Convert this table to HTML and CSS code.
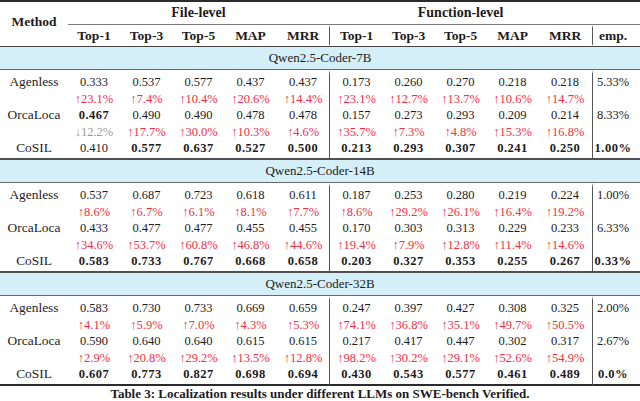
FILE: index.html
```html
<!DOCTYPE html>
<html>
<head>
<meta charset="utf-8">
<link rel="stylesheet" href="styles.css">
</head>
<body>
<table class="results">
<colgroup>
<col class="c-method"><col class="c-f1"><col class="c-f3"><col class="c-f5"><col class="c-fmap"><col class="c-fmrr">
<col class="c-g1"><col class="c-g3"><col class="c-g5"><col class="c-gmap"><col class="c-gmrr"><col class="c-emp">
</colgroup>
<thead>
<tr class="h1">
<th rowspan="2" class="method-h">Method</th>
<th colspan="5" class="grp">File-level</th>
<th colspan="5" class="grp">Function-level</th>
<th class="grp"></th>
</tr>
<tr class="h2">
<th>Top-1</th><th>Top-3</th><th>Top-5</th><th>MAP</th><th>MRR</th>
<th class="div">Top-1</th><th>Top-3</th><th>Top-5</th><th>MAP</th><th>MRR</th>
<th class="div emp">emp.</th>
</tr>
</thead>
<tbody>
<tr class="band first-band"><td colspan="12">Qwen2.5-Coder-7B</td></tr>
<tr class="first"><td class="m">Agenless</td><td>0.333</td><td>0.537</td><td>0.577</td><td>0.437</td><td>0.437</td><td class="div">0.173</td><td>0.260</td><td>0.270</td><td>0.218</td><td>0.218</td><td class="div emp">5.33%</td></tr>
<tr><td class="m"></td><td class="up">↑23.1%</td><td class="up">↑7.4%</td><td class="up">↑10.4%</td><td class="up">↑20.6%</td><td class="up">↑14.4%</td><td class="div up">↑23.1%</td><td class="up">↑12.7%</td><td class="up">↑13.7%</td><td class="up">↑10.6%</td><td class="up">↑14.7%</td><td class="div emp"></td></tr>
<tr><td class="m">OrcaLoca</td><td class="b">0.467</td><td>0.490</td><td>0.490</td><td>0.478</td><td>0.478</td><td class="div">0.157</td><td>0.273</td><td>0.293</td><td>0.209</td><td>0.214</td><td class="div emp">8.33%</td></tr>
<tr><td class="m"></td><td class="down">↓12.2%</td><td class="up">↑17.7%</td><td class="up">↑30.0%</td><td class="up">↑10.3%</td><td class="up">↑4.6%</td><td class="div up">↑35.7%</td><td class="up">↑7.3%</td><td class="up">↑4.8%</td><td class="up">↑15.3%</td><td class="up">↑16.8%</td><td class="div emp"></td></tr>
<tr class="last"><td class="m">CoSIL</td><td>0.410</td><td class="b">0.577</td><td class="b">0.637</td><td class="b">0.527</td><td class="b">0.500</td><td class="div b">0.213</td><td class="b">0.293</td><td class="b">0.307</td><td class="b">0.241</td><td class="b">0.250</td><td class="div emp b">1.00%</td></tr>
</tbody>
<tbody>
<tr class="band"><td colspan="12">Qwen2.5-Coder-14B</td></tr>
<tr class="first"><td class="m">Agenless</td><td>0.537</td><td>0.687</td><td>0.723</td><td>0.618</td><td>0.611</td><td class="div">0.187</td><td>0.253</td><td>0.280</td><td>0.219</td><td>0.224</td><td class="div emp">1.00%</td></tr>
<tr><td class="m"></td><td class="up">↑8.6%</td><td class="up">↑6.7%</td><td class="up">↑6.1%</td><td class="up">↑8.1%</td><td class="up">↑7.7%</td><td class="div up">↑8.6%</td><td class="up">↑29.2%</td><td class="up">↑26.1%</td><td class="up">↑16.4%</td><td class="up">↑19.2%</td><td class="div emp"></td></tr>
<tr><td class="m">OrcaLoca</td><td>0.433</td><td>0.477</td><td>0.477</td><td>0.455</td><td>0.455</td><td class="div">0.170</td><td>0.303</td><td>0.313</td><td>0.229</td><td>0.233</td><td class="div emp">6.33%</td></tr>
<tr><td class="m"></td><td class="up">↑34.6%</td><td class="up">↑53.7%</td><td class="up">↑60.8%</td><td class="up">↑46.8%</td><td class="up">↑44.6%</td><td class="div up">↑19.4%</td><td class="up">↑7.9%</td><td class="up">↑12.8%</td><td class="up">↑11.4%</td><td class="up">↑14.6%</td><td class="div emp"></td></tr>
<tr class="last"><td class="m">CoSIL</td><td class="b">0.583</td><td class="b">0.733</td><td class="b">0.767</td><td class="b">0.668</td><td class="b">0.658</td><td class="div b">0.203</td><td class="b">0.327</td><td class="b">0.353</td><td class="b">0.255</td><td class="b">0.267</td><td class="div emp b">0.33%</td></tr>
</tbody>
<tbody>
<tr class="band"><td colspan="12">Qwen2.5-Coder-32B</td></tr>
<tr class="first"><td class="m">Agenless</td><td>0.583</td><td>0.730</td><td>0.733</td><td>0.669</td><td>0.659</td><td class="div">0.247</td><td>0.397</td><td>0.427</td><td>0.308</td><td>0.325</td><td class="div emp">2.00%</td></tr>
<tr><td class="m"></td><td class="up">↑4.1%</td><td class="up">↑5.9%</td><td class="up">↑7.0%</td><td class="up">↑4.3%</td><td class="up">↑5.3%</td><td class="div up">↑74.1%</td><td class="up">↑36.8%</td><td class="up">↑35.1%</td><td class="up">↑49.7%</td><td class="up">↑50.5%</td><td class="div emp"></td></tr>
<tr><td class="m">OrcaLoca</td><td>0.590</td><td>0.640</td><td>0.640</td><td>0.615</td><td>0.615</td><td class="div">0.217</td><td>0.417</td><td>0.447</td><td>0.302</td><td>0.317</td><td class="div emp">2.67%</td></tr>
<tr><td class="m"></td><td class="up">↑2.9%</td><td class="up">↑20.8%</td><td class="up">↑29.2%</td><td class="up">↑13.5%</td><td class="up">↑12.8%</td><td class="div up">↑98.2%</td><td class="up">↑30.2%</td><td class="up">↑29.1%</td><td class="up">↑52.6%</td><td class="up">↑54.9%</td><td class="div emp"></td></tr>
<tr class="last final"><td class="m">CoSIL</td><td class="b">0.607</td><td class="b">0.773</td><td class="b">0.827</td><td class="b">0.698</td><td class="b">0.694</td><td class="div b">0.430</td><td class="b">0.543</td><td class="b">0.577</td><td class="b">0.461</td><td class="b">0.489</td><td class="div emp b">0.0%</td></tr>
</tbody>
</table>
<p class="caption">Table 3: Localization results under different LLMs on SWE-bench Verified.</p>
</body>
</html>
```

FILE: styles.css
```css
html, body {
  margin: 0;
  padding: 0;
  background: #ffffff;
}

body {
  font-family: "Liberation Serif", "FreeSerif", serif;
  color: #1e1b1c;
  width: 640px;
}

.results {
  width: 640px;
  table-layout: fixed;
  border-collapse: separate;
  border-spacing: 0;
  font-family: "Liberation Serif", "FreeSerif", serif;
}

.c-method { width: 68px; }
.c-f1 { width: 52px; }
.c-f3 { width: 53px; }
.c-f5 { width: 51px; }
.c-fmap { width: 53px; }
.c-fmrr { width: 52px; }
.c-g1 { width: 54px; }
.c-g3 { width: 51px; }
.c-g5 { width: 53px; }
.c-gmap { width: 51px; }
.c-gmrr { width: 54px; }
.c-emp { width: 48px; }

.results th,
.results td {
  padding: 0;
  text-align: center;
  vertical-align: middle;
  white-space: nowrap;
}

/* data cells (base) */
.results td {
  font-size: 12.5px;
  line-height: 16.5px;
}

/* header */
.results th {
  font-weight: bold;
  font-size: 13.5px;
}

.results .h1 th {
  border-top: 2px solid #2b2b2b;
  line-height: 22px;
  font-size: 14px;
}

.results .h1 th.grp {
  border-bottom: 1px solid #7a7a7a;
}

.results .h1 th.method-h {
  font-size: 13.5px;
  padding-bottom: 4px;
}

.results .h2 th {
  line-height: 16px;
  border-top: 3px solid transparent;
  border-bottom: 2px solid transparent;
}

.results .div {
  border-left: 1px solid #555555;
}

.results .emp {
  padding-right: 7px;
}

/* model bands */
.results .band td {
  background: #d5eff9;
  font-size: 13px;
  line-height: 22px;
  border-top: 2px solid #505050;
  border-bottom: 1px solid #6a6a6a;
}

.results .first-band td {
  border-top: 1px solid #444444;
}

.results td.m {
  font-size: 13.4px;
}

.results .first td {
  border-top: 4px solid transparent;
}

.results .last td {
  padding-bottom: 1.5px;
}

.results .final td {
  border-bottom: 2px solid #2b2b2b;
}

.results .b {
  font-weight: bold;
  letter-spacing: 0.5px;
}

.results .up {
  color: #ec2f47;
}

.results .down {
  color: #9b9b9b;
}

.caption {
  margin: 2px 0 0;
  text-align: center;
  font-weight: bold;
  font-size: 13px;
  line-height: 12px;
}
```
